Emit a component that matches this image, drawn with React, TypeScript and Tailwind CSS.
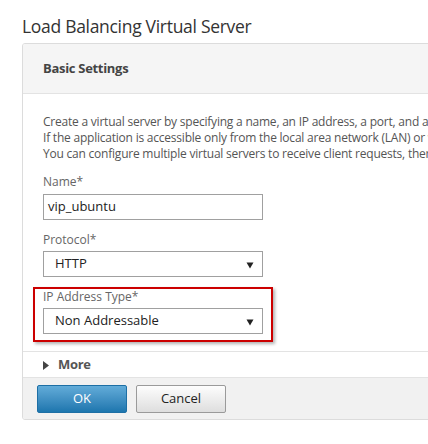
import React from "react";

function Arrow() {
  return (
    <svg width="8" height="7" viewBox="0 0 8 7" className="absolute right-[8px] top-[10px]">
      <path d="M0.5 0.5 H7.5 L4 6.5 Z" fill="#222" />
    </svg>
  );
}

function Select({ value }: { value: string }) {
  return (
    <div className="relative w-[220px] h-[26px] border border-[#a0a0a0] bg-white flex items-center pl-[11px] text-[13px] text-[#222]">
      {value}
      <Arrow />
    </div>
  );
}

export default function App() {
  return (
    <div className="w-[428px] h-[444px] overflow-hidden bg-white font-['Open_Sans',_'Noto_Sans',_sans-serif]">
      <div className="pl-[22px] pt-[14px] h-[43px] text-[17.5px] leading-[24px] text-[#333] tracking-[-0.3px]">
        Load Balancing Virtual Server
      </div>
      <div className="ml-[22px] w-[480px] border border-[#dcdcdc] rounded-l-[3px] overflow-hidden">
        <div className="h-[50px] bg-[#f5f5f5] border-b border-[#e3e3e3] pl-[20px] flex items-center text-[13px] font-bold text-[#444] tracking-[-0.3px]">
          Basic Settings
        </div>
        <div className="pl-[20px] pt-[20px] pb-[9px] border-b border-[#e3e3e3]">
          <div className="text-[12px] leading-[16px] text-[#555] whitespace-nowrap tracking-[-0.22px]">
            <div>Create a virtual server by specifying a name, an IP address, a port, and a protocol type.</div>
            <div>If the application is accessible only from the local area network (LAN) or wide area network,</div>
            <div>You can configure multiple virtual servers to receive client requests, thereby increasing</div>
          </div>
          <div className="mt-[12px] text-[12px] leading-[16px] text-[#666]">Name*</div>
          <div className="mt-[4px] w-[220px] h-[26px] border border-[#a0a0a0] bg-white flex items-center pl-[4px] text-[13px] text-[#222]">
            vip_ubuntu
          </div>
          <div className="mt-[12px] text-[12px] leading-[16px] text-[#666]">Protocol*</div>
          <div className="mt-[3px]">
            <Select value="HTTP" />
          </div>
          <div className="mt-[10px] -ml-[10px] w-[240px] border-2 border-[#cc0000] pl-[8px] pb-[6px] shadow-[2px_2px_3px_rgba(0,0,0,0.3)]">
            <div className="text-[12px] leading-[16px] text-[#666]">IP Address Type*</div>
            <div className="mt-[3px]">
              <Select value="Non Addressable" />
            </div>
          </div>
        </div>
        <div className="h-[26px] pl-[20px] pt-[1px] flex items-center gap-[9px] border-b border-[#e3e3e3]">
          <svg width="6" height="9" viewBox="0 0 6 9">
            <path d="M0 0 L6 4.5 L0 9 Z" fill="#444" />
          </svg>
          <span className="text-[13px] font-bold text-[#555] tracking-[-0.3px]">More</span>
        </div>
        <div className="h-[41px] bg-[#f1f1f1] pl-[14px] pt-[7px] flex gap-[9px]">
          <button className="w-[90px] h-[28px] rounded-[2px] border border-[#1d6fa5] bg-gradient-to-b from-[#62acd9] to-[#1c76ae] text-white text-[13px]">
            OK
          </button>
          <button className="w-[90px] h-[28px] rounded-[2px] border border-[#9a9a9a] bg-gradient-to-b from-[#fdfdfd] to-[#dedede] text-[#222] text-[13px]">
            Cancel
          </button>
        </div>
      </div>
    </div>
  );
}
